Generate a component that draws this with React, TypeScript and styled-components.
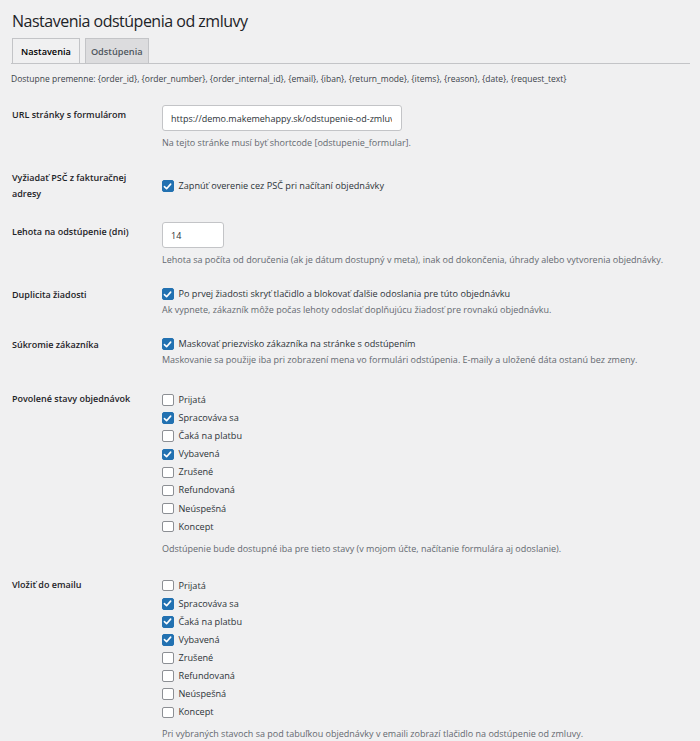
import styled, { createGlobalStyle } from "styled-components"

const GlobalStyle = createGlobalStyle`
  html, body {
    margin: 0;
    padding: 0;
    background: #f0f0f1;
  }
  body {
    font-family: "Open Sans", "Noto Sans", sans-serif;
    color: #1d2327;
    font-size: 9px;
  }
`

const STATUSES = ["Prijatá", "Spracováva sa", "Čaká na platbu", "Vybavená", "Zrušené", "Refundovaná", "Neúspešná", "Koncept"]

const Wrap = styled.div`
  padding: 0 10px 0 12px;
`

const Title = styled.h1`
  margin: 0;
  padding: 10px 0 0;
  font-size: 16px;
  letter-spacing: -0.5px;
  font-weight: 400;
  line-height: 22px;
  color: #1d2327;
`

const TabBar = styled.div`
  display: flex;
  gap: 5px;
  margin: 6px 0 0 -1px;
  padding-left: 1px;
  border-bottom: 1px solid #c3c4c7;
`

const Tab = styled.div<{ $active?: boolean }>`
  padding: 0 ${({ $active }) => ($active ? 8 : 5)}px;
  height: 24px;
  line-height: 25px;
  font-size: 9.2px;
  font-weight: 600;
  border: 1px solid #c3c4c7;
  border-bottom: none;
  margin-bottom: ${({ $active }) => ($active ? "-1px" : "0")};
  background: ${({ $active }) => ($active ? "#f0f0f1" : "#dcdcde")};
  color: ${({ $active }) => ($active ? "#000" : "#50575e")};
`

const Info = styled.p`
  margin: 9px 0 0 -1px;
  font-size: 8.5px;
  line-height: 12px;
  color: #3c434a;
`

const FormTable = styled.div`
  margin-top: 10px;
`

const Row = styled.div<{ $pb?: number }>`
  display: grid;
  grid-template-columns: 150px 1fr;
  align-items: center;
  padding: 10px 0 ${({ $pb }) => $pb ?? 10}px;
`

const Label = styled.div<{ $pt?: number }>`
  align-self: start;
  padding: ${({ $pt }) => $pt ?? 0}px 10px 0 0;
  font-size: 9px;
  font-weight: 600;
  line-height: 16px;
  color: #1d2327;
`

const Field = styled.div`
  display: flex;
  flex-direction: column;
  align-items: flex-start;
`

const TextInput = styled.input<{ $w: number }>`
  box-sizing: border-box;
  width: ${({ $w }) => $w}px;
  height: 26px;
  padding: 0 9px 0 8px;
  border: 1px solid #c3c4c7;
  border-radius: 3px;
  background: #fff;
  font-family: inherit;
  font-size: 9px;
  color: #2c3338;
  outline: none;
`

const Description = styled.p<{ $gap?: number }>`
  margin: ${({ $gap }) => $gap ?? 5}px 0 0;
  font-size: 9px;
  line-height: 14px;
  color: #646970;
`

const CheckList = styled.div`
  display: flex;
  flex-direction: column;
  gap: 6.1px;
  margin-top: 4px;
`

const CheckLine = styled.label<{ $lh?: number }>`
  display: flex;
  align-items: center;
  gap: 5px;
  font-size: 9.15px;
  line-height: ${({ $lh }) => $lh ?? 12}px;
  color: #2c3338;
`

const Box = styled.span<{ $on: boolean }>`
  box-sizing: border-box;
  width: 11.5px;
  height: 11.5px;
  border-radius: 2px;
  border: 1px solid ${({ $on }) => ($on ? "#2271b1" : "#8c8f94")};
  background: ${({ $on }) => ($on ? "#2271b1" : "#fff")};
  display: flex;
  align-items: center;
  justify-content: center;
  flex-shrink: 0;
`

function Check({ on, text, lh }: { on: boolean; text: string; lh?: number }) {
  return (
    <CheckLine $lh={lh}>
      <Box $on={on}>
        {on && (
          <svg width="9" height="9" viewBox="0 0 10 10">
            <path d="M1.6 5.2 L4 7.5 L8.5 2.4" fill="none" stroke="#fff" strokeWidth="1.8" strokeLinecap="round" strokeLinejoin="round" />
          </svg>
        )}
      </Box>
      {text}
    </CheckLine>
  )
}

function StatusList({ checked }: { checked: string[] }) {
  return (
    <CheckList>
      {STATUSES.map((s) => (
        <Check key={s} on={checked.includes(s)} text={s} />
      ))}
    </CheckList>
  )
}

export default function App() {
  return (
    <Wrap>
      <GlobalStyle />
      <Title>Nastavenia odstúpenia od zmluvy</Title>
      <TabBar>
        <Tab $active>Nastavenia</Tab>
        <Tab>Odstúpenia</Tab>
      </TabBar>
      <Info>
        Dostupne premenne: {"{order_id}, {order_number}, {order_internal_id}, {email}, {iban}, {return_mode}, {items}, {reason}, {date}, {request_text}"}
      </Info>

      <FormTable>
        <Row>
          <Label $pt={2}>URL stránky s formulárom</Label>
          <Field>
            <TextInput $w={240} readOnly value="https://demo.makemehappy.sk/odstupenie-od-zmluvy/" />
            <Description>Na tejto stránke musí byť shortcode [odstupenie_formular].</Description>
          </Field>
        </Row>

        <Row>
          <Label>Vyžiadať PSČ z fakturačnej adresy</Label>
          <Field>
            <Check on lh={14} text="Zapnúť overenie cez PSČ pri načítaní objednávky" />
          </Field>
        </Row>

        <Row>
          <Label $pt={2}>Lehota na odstúpenie (dni)</Label>
          <Field>
            <TextInput $w={62} readOnly value="14" />
            <Description>Lehota sa počíta od doručenia (ak je dátum dostupný v meta), inak od dokončenia, úhrady alebo vytvorenia objednávky.</Description>
          </Field>
        </Row>

        <Row>
          <Label>Duplicita žiadosti</Label>
          <Field>
            <Check on lh={14} text="Po prvej žiadosti skryť tlačidlo a blokovať ďalšie odoslania pre túto objednávku" />
            <Description $gap={2}>Ak vypnete, zákazník môže počas lehoty odoslať doplňujúcu žiadosť pre rovnakú objednávku.</Description>
          </Field>
        </Row>

        <Row $pb={13}>
          <Label>Súkromie zákazníka</Label>
          <Field>
            <Check on lh={14} text="Maskovať priezvisko zákazníka na stránke s odstúpením" />
            <Description $gap={2}>Maskovanie sa použije iba pri zobrazení mena vo formulári odstúpenia. E-maily a uložené dáta ostanú bez zmeny.</Description>
          </Field>
        </Row>

        <Row>
          <Label $pt={1}>Povolené stavy objednávok</Label>
          <Field>
            <StatusList checked={["Spracováva sa", "Vybavená"]} />
            <Description $gap={9}>Odstúpenie bude dostupné iba pre tieto stavy (v mojom účte, načítanie formulára aj odoslanie).</Description>
          </Field>
        </Row>

        <Row>
          <Label $pt={1}>Vložiť do emailu</Label>
          <Field>
            <StatusList checked={["Spracováva sa", "Čaká na platbu", "Vybavená"]} />
            <Description $gap={9}>Pri vybraných stavoch sa pod tabuľkou objednávky v emaili zobrazí tlačidlo na odstúpenie od zmluvy.</Description>
          </Field>
        </Row>
      </FormTable>
    </Wrap>
  )
}
